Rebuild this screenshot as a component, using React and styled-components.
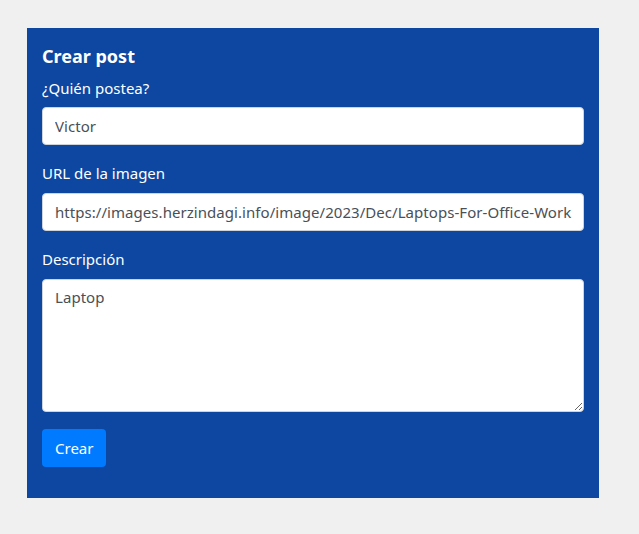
import React, { useState } from 'react'
import styled, { createGlobalStyle } from 'styled-components'

const GlobalStyle = createGlobalStyle`
	html, body {
		margin: 0;
		background: #f0f0f0;
	}
	body {
		padding: 28px 40px 36px 27px;
		font-family: "Noto Sans", "Open Sans", sans-serif;
	}
	* {
		box-sizing: border-box;
	}
`

const Panel = styled.form`
	width: 572px;
	background: #0d47a1;
	color: #fff;
	padding: 16px 15px 31px;
	display: flex;
	flex-direction: column;
`

const Title = styled.h2`
	margin: 0;
	font-size: 18px;
	line-height: 24px;
	font-weight: 700;
`

const Label = styled.label`
	display: block;
	margin: ${p => (p.first ? '9px 0 8px' : '17px 0 9px')};
	font-size: 15px;
	line-height: 22px;
`

const fieldStyles = `
	width: 100%;
	border: 1px solid #ced4da;
	border-radius: 4px;
	background: #fff;
	color: #495057;
	font-family: inherit;
	font-size: 15px;
	letter-spacing: 0.05px;
	padding: 6px 10px 6px 12px;
	outline: none;
`

const Input = styled.input`
	${fieldStyles}
	height: 38px;
`

const TextArea = styled.textarea`
	${fieldStyles}
	height: 133px;
	line-height: 22px;
	resize: vertical;
	display: block;
`

const Button = styled.button`
	align-self: flex-start;
	margin-top: 17px;
	height: 38px;
	padding: 0 13px;
	border: none;
	border-radius: 4px;
	background: #007bff;
	color: #fff;
	font-family: inherit;
	font-size: 15px;
	cursor: pointer;
`

const App = () => {
	const [autor, setAutor] = useState('Victor')
	const [imagen, setImagen] = useState(
		'https://images.herzindagi.info/image/2023/Dec/Laptops-For-Office-Work',
	)
	const [descripcion, setDescripcion] = useState('Laptop')

	return (
		<>
			<GlobalStyle />
			<Panel onSubmit={e => e.preventDefault()}>
				<Title>Crear post</Title>
				<Label first htmlFor="autor">¿Quién postea?</Label>
				<Input id="autor" value={autor} onChange={e => setAutor(e.target.value)} />
				<Label htmlFor="imagen">URL de la imagen</Label>
				<Input id="imagen" value={imagen} onChange={e => setImagen(e.target.value)} />
				<Label htmlFor="descripcion">Descripción</Label>
				<TextArea
					id="descripcion"
					value={descripcion}
					onChange={e => setDescripcion(e.target.value)}
				/>
				<Button type="submit">Crear</Button>
			</Panel>
		</>
	)
}

export default App
